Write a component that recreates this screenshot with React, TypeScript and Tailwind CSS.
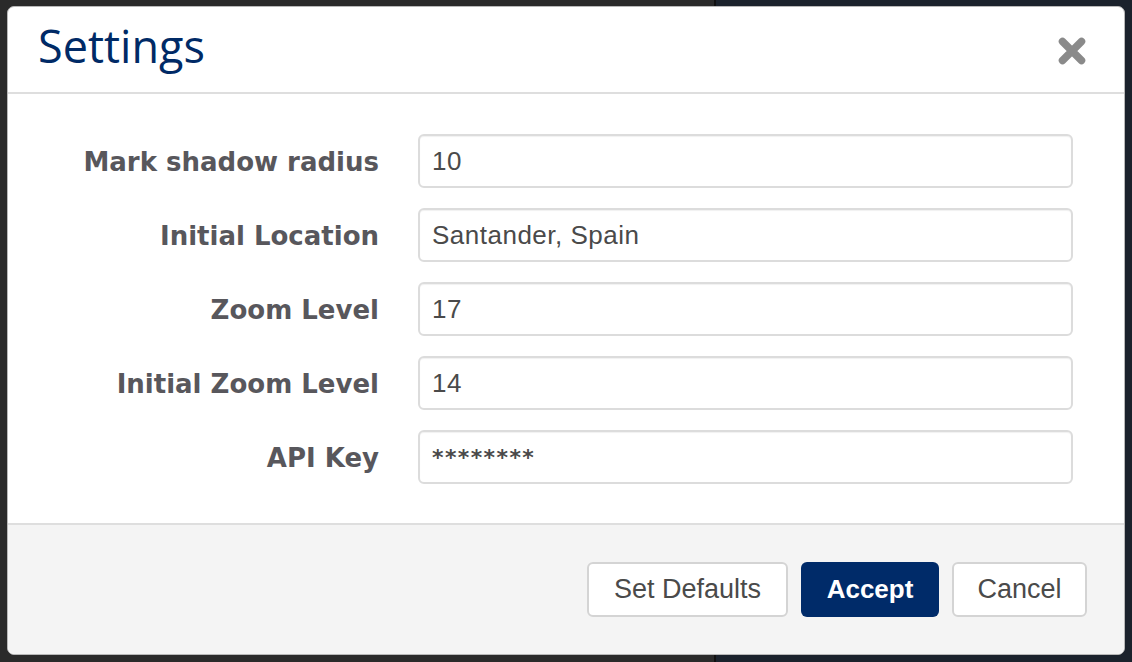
import React from "react";

const rows: [string, string][] = [
  ["Mark shadow radius", "10"],
  ["Initial Location", "Santander, Spain"],
  ["Zoom Level", "17"],
  ["Initial Zoom Level", "14"],
  ["API Key", "********"],
];

export default function App() {
  return (
    <div className="relative h-[662px] w-[1132px] overflow-hidden bg-[#2a2a2a]">
      <div className="absolute right-0 top-0 h-full w-[417px] bg-[#1b222c]" />
      <div className="absolute left-[714px] top-0 h-full w-[2px] bg-[#111]" />
      <div className="relative ml-[7px] mt-[6px] flex h-[649px] w-[1118px] flex-col overflow-hidden rounded-[7px] border border-[#b8b8b8] bg-white">
        {/* header */}
        <div className="flex h-[87px] items-center justify-between border-b-2 border-[#dedede] pl-[30px] pr-[38px]">
          <h1
            className="pb-[8px] text-[45px] leading-none text-[#002a66]"
            style={{ fontFamily: '"Open Sans", sans-serif' }}
          >
            Settings
          </h1>
          <svg width="28" height="28" viewBox="0 0 28 28" className="mt-[2px]">
            <path
              d="M4.5 4.5 L23.5 23.5 M23.5 4.5 L4.5 23.5"
              stroke="#8a8a8a"
              strokeWidth="7.5"
              strokeLinecap="round"
            />
          </svg>
        </div>
        {/* body */}
        <div className="flex flex-col gap-[20px] pb-[39px] pl-[40px] pr-[51px] pt-[40px]">
          {rows.map(([label, value]) => (
            <div key={label} className="flex items-center gap-[39px]">
              <label
                className="w-[331px] pt-[3px] text-right text-[26px] font-bold whitespace-nowrap text-[#58575c]"
                style={{ fontFamily: '"DejaVu Sans", Verdana, sans-serif' }}
              >
                {label}
              </label>
              <div
                className="flex h-[54px] flex-1 items-center rounded-[6px] border-2 border-[#dcdcdc] px-[12px] text-[26px] tracking-[0.5px] text-[#4a4a4a] shadow-[inset_0_1px_1px_rgba(0,0,0,0.06)]"
                style={{ fontFamily: '"Liberation Sans", Arial, sans-serif' }}
              >
                {value === "********" ? (
                  <span
                    className="font-bold tracking-[1.4px]"
                    style={{ fontFamily: '"DejaVu Sans", sans-serif', fontSize: 22 }}
                  >
                    {value}
                  </span>
                ) : (
                  value
                )}
              </div>
            </div>
          ))}
        </div>
        {/* footer */}
        <div
          className="flex flex-1 items-center justify-end gap-[13px] border-t-2 border-[#dedede] bg-[#f4f4f4] pr-[37px]"
          style={{ fontFamily: '"Liberation Sans", Arial, sans-serif' }}
        >
          <button className="h-[55px] w-[201px] rounded-[6px] border-2 border-[#d4d4d4] bg-white text-[27px] text-[#4a4a4a]">
            Set Defaults
          </button>
          <button className="h-[55px] w-[138px] rounded-[6px] bg-[#002b69] text-[26px] font-bold text-white">
            Accept
          </button>
          <button className="h-[55px] w-[135px] rounded-[6px] border-2 border-[#d4d4d4] bg-white text-[27px] text-[#4a4a4a]">
            Cancel
          </button>
        </div>
      </div>
    </div>
  );
}
